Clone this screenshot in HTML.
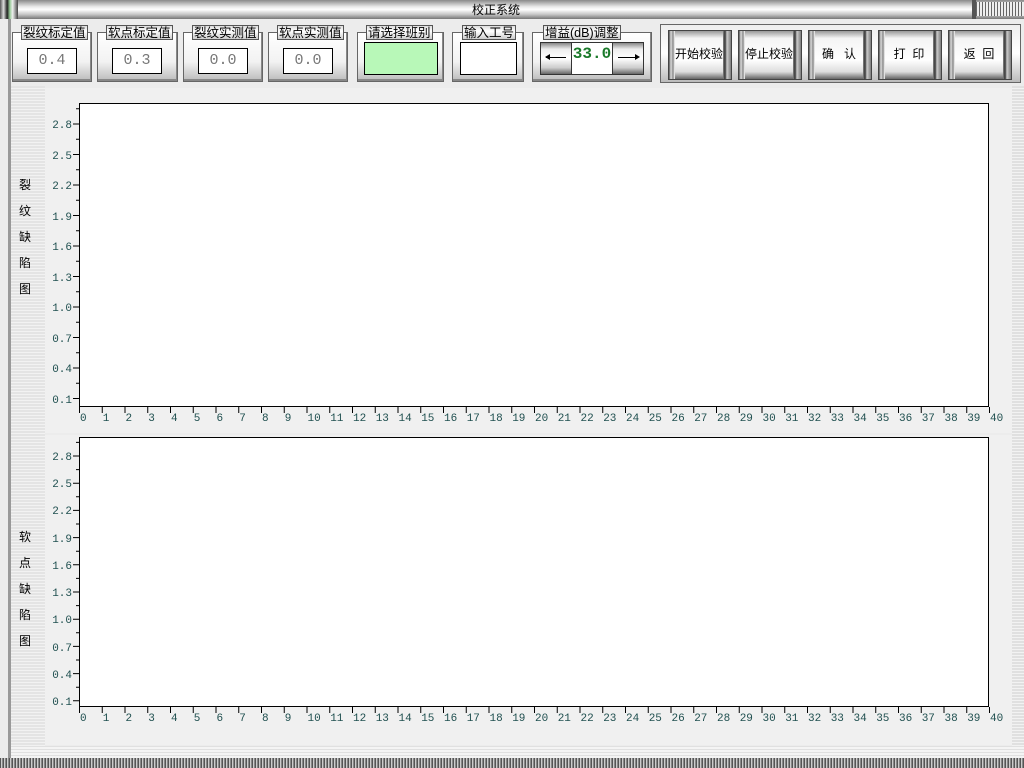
<!DOCTYPE html>
<html><head><meta charset="utf-8"><style>
*{margin:0;padding:0;box-sizing:border-box}
body{width:1024px;height:768px;position:relative;overflow:hidden;background:#ececec;font-family:"Liberation Sans","Noto Sans CJK SC",sans-serif;}
.abs{position:absolute}
.title{left:0;top:0;width:1024px;height:19px;background:linear-gradient(#8a8a8a,#e8e8e8 35%,#fff 50%,#c8c8c8 75%,#777);}
.title span{position:absolute;left:472px;top:1px;font-size:12px;color:#000}
.grp{position:absolute;top:32px;height:50px;border:1px solid #666;background:linear-gradient(#fff,#f2f2f2 60%,#bbb);box-shadow:inset -1px -2px 0 #888}
.lbl{position:absolute;top:25px;height:15px;font-size:12.5px;line-height:14px;padding:0 1px;background:linear-gradient(#ddd,#fff 40%,#ccc);border:1px solid #555;color:#000;white-space:nowrap}
.val{position:absolute;top:48px;height:26px;background:#fff;border:1px solid #000;font-family:"Liberation Mono",monospace;font-size:15px;color:#777;text-align:center;line-height:24px}
.btn{position:absolute;top:30px;width:64px;height:50px;border:1px solid #444;background:linear-gradient(90deg,#555 0,#ddd 2px,#888 4px,#fff 6px,#fff 52px,#888 54px,#333 56px,#ccc 58px,#555 64px);font-size:12px;text-align:center;line-height:47px;white-space:nowrap}
.btn i{position:absolute;left:6px;right:8px;top:0;bottom:0;background:linear-gradient(#999,#f4f4f4 15%,#fff 60%,#ddd 85%,#666);font-style:normal}
</style></head><body>
<div class="abs title"><span>校正系统</span></div>
<div class="abs" style="left:0;top:0;width:18px;height:19px;background:linear-gradient(90deg,#555,#ddd 20%,#222 40%,#9c9 55%,#eee 70%,#444)"></div>
<div class="abs" style="left:972px;top:0;width:4px;height:19px;background:#555"></div>
<div class="abs" style="left:976px;top:2px;width:48px;height:14px;background:repeating-linear-gradient(90deg,#666 0 1px,#eee 1px 3px)"></div>
<div class="abs" style="left:8px;top:19px;width:3px;height:740px;background:#999"></div>
<div class="abs" style="left:11px;top:86px;width:34px;height:660px;background:repeating-linear-gradient(#e4e4e4 0 2px,#f2f2f2 2px 3px)"></div>
<div class="abs" style="left:1012px;top:86px;width:12px;height:660px;background:repeating-linear-gradient(#e0e0e0 0 2px,#f2f2f2 2px 3px)"></div>
<div class="abs" style="left:45px;top:88px;width:967px;height:345px;background:#f0f0f0"></div>
<div class="abs" style="left:45px;top:435px;width:967px;height:310px;background:#f0f0f0"></div>
<div class="abs" style="left:11px;top:746px;width:1013px;height:12px;background:repeating-linear-gradient(#e0e0e0 0 1px,#f4f4f4 1px 3px)"></div>
<div class="abs" style="left:0;top:758px;width:1024px;height:10px;background:repeating-linear-gradient(90deg,#555 0 1px,#ccc 1px 2px,#888 2px 3px)"></div>

<div class="grp" style="left:12px;width:80px"></div><div class="lbl" style="left:21px">裂纹标定值</div><div class="val" style="left:27px;width:50px">0.4</div>
<div class="grp" style="left:97px;width:81px"></div><div class="lbl" style="left:106px">软点标定值</div><div class="val" style="left:112px;width:50px">0.3</div>
<div class="grp" style="left:183px;width:80px"></div><div class="lbl" style="left:192px">裂纹实测值</div><div class="val" style="left:198px;width:50px">0.0</div>
<div class="grp" style="left:268px;width:80px"></div><div class="lbl" style="left:277px">软点实测值</div><div class="val" style="left:283px;width:50px">0.0</div>
<div class="grp" style="left:357px;width:87px"></div><div class="lbl" style="left:366px">请选择班别</div><div class="val" style="left:364px;width:74px;top:42px;height:33px;background:#b8f8b8"></div>
<div class="grp" style="left:452px;width:72px"></div><div class="lbl" style="left:462px">输入工号</div><div class="val" style="left:460px;width:57px;top:42px;height:33px"></div>
<div class="grp" style="left:532px;width:120px"></div><div class="lbl" style="left:543px">增益(dB)调整</div>
<div class="abs" style="left:540px;top:42px;width:104px;height:33px;border:1px solid #333;background:linear-gradient(#888,#eee 20%,#fff 50%,#ccc 80%,#666)"></div>
<div class="abs" style="left:571px;top:42px;width:42px;height:33px;background:#fff;border:1px solid #333;color:#1a7a2a;font-family:'Liberation Mono',monospace;font-size:16px;font-weight:bold;text-align:center;line-height:22px">33.0</div>
<div class="abs" style="left:546px;top:57px;width:20px;height:1px;background:#000"></div><div class="abs" style="left:545px;top:54px;width:0;height:0;border:3px solid transparent;border-right:5px solid #000;border-left:0"></div>
<div class="abs" style="left:618px;top:57px;width:20px;height:1px;background:#000"></div><div class="abs" style="left:635px;top:54px;width:0;height:0;border:3px solid transparent;border-left:5px solid #000;border-right:0"></div>

<div class="abs" style="left:660px;top:24px;width:361px;height:59px;border:1px solid #666;background:linear-gradient(#eee,#fff 50%,#bbb);"></div>
<div class="btn" style="left:668px"><i>开始校验</i></div>
<div class="btn" style="left:738px"><i>停止校验</i></div>
<div class="btn" style="left:808px"><i>确&nbsp;&nbsp;&nbsp;认</i></div>
<div class="btn" style="left:878px"><i>打&nbsp;&nbsp;印</i></div>
<div class="btn" style="left:948px"><i>返&nbsp;&nbsp;回</i></div>

<div class="abs" style="left:19px;top:172px;font-size:12px;line-height:26px;width:14px">裂<br>纹<br>缺<br>陷<br>图</div>
<div class="abs" style="left:19px;top:524px;font-size:12px;line-height:26px;width:14px">软<br>点<br>缺<br>陷<br>图</div>

<svg class="abs" style="left:0;top:0" width="1024" height="768" font-family="Liberation Mono, monospace" font-size="11" fill="#1f4f4f">
<rect x="79.5" y="103.5" width="909" height="303" fill="#fff" stroke="#000"/>
<rect x="79.5" y="437.5" width="909" height="269" fill="#fff" stroke="#000"/>
<path fill="none" stroke="#000" d="M79.5 407v6m22.75-6v6m22.75-6v6m22.75-6v6m22.75-6v6m22.75-6v6m22.75-6v6m22.75-6v6m22.75-6v6m22.75-6v6m22.75-6v6m22.75-6v6m22.75-6v6m22.75-6v6m22.75-6v6m22.75-6v6m22.75-6v6m22.75-6v6m22.75-6v6m22.75-6v6m22.75-6v6m22.75-6v6m22.75-6v6m22.75-6v6m22.75-6v6m22.75-6v6m22.75-6v6m22.75-6v6m22.75-6v6m22.75-6v6m22.75-6v6m22.75-6v6m22.75-6v6m22.75-6v6m22.75-6v6m22.75-6v6m22.75-6v6m22.75-6v6m22.75-6v6m22.75-6v6m22.75-6v6"/>
<path fill="none" stroke="#000" d="M79.5 707v6m22.75-6v6m22.75-6v6m22.75-6v6m22.75-6v6m22.75-6v6m22.75-6v6m22.75-6v6m22.75-6v6m22.75-6v6m22.75-6v6m22.75-6v6m22.75-6v6m22.75-6v6m22.75-6v6m22.75-6v6m22.75-6v6m22.75-6v6m22.75-6v6m22.75-6v6m22.75-6v6m22.75-6v6m22.75-6v6m22.75-6v6m22.75-6v6m22.75-6v6m22.75-6v6m22.75-6v6m22.75-6v6m22.75-6v6m22.75-6v6m22.75-6v6m22.75-6v6m22.75-6v6m22.75-6v6m22.75-6v6m22.75-6v6m22.75-6v6m22.75-6v6m22.75-6v6m22.75-6v6"/>
<path fill="none" stroke="#000" d="M76 108.75h3m-6 15.25h6m-3 15.25h3m-6 15.25h6m-3 15.25h3m-6 15.25h6m-3 15.25h3m-6 15.25h6m-3 15.25h3m-6 15.25h6m-3 15.25h3m-6 15.25h6m-3 15.25h3m-6 15.25h6m-3 15.25h3m-6 15.25h6m-3 15.25h3m-6 15.25h6m-3 15.25h3m-6 15.25h6"/>
<path fill="none" stroke="#000" d="M76 442.4h3m-6 13.6h6m-3 13.6h3m-6 13.6h6m-3 13.6h3m-6 13.6h6m-3 13.6h3m-6 13.6h6m-3 13.6h3m-6 13.6h6m-3 13.6h3m-6 13.6h6m-3 13.6h3m-6 13.6h6m-3 13.6h3m-6 13.6h6m-3 13.6h3m-6 13.6h6m-3 13.6h3m-6 13.6h6"/>
<g text-anchor="end">
<text x="72" y="128">2.8</text><text x="72" y="159">2.5</text><text x="72" y="189">2.2</text><text x="72" y="220">1.9</text><text x="72" y="250">1.6</text><text x="72" y="281">1.3</text><text x="72" y="311">1.0</text><text x="72" y="342">0.7</text><text x="72" y="372">0.4</text><text x="72" y="403">0.1</text>
<text x="72" y="460">2.8</text><text x="72" y="487">2.5</text><text x="72" y="514">2.2</text><text x="72" y="542">1.9</text><text x="72" y="569">1.6</text><text x="72" y="596">1.3</text><text x="72" y="623">1.0</text><text x="72" y="651">0.7</text><text x="72" y="678">0.4</text><text x="72" y="705">0.1</text>
</g>
<g>
<text y="421" x="80">0</text><text y="421" x="102.7">1</text><text y="421" x="125.5">2</text><text y="421" x="148.2">3</text><text y="421" x="171">4</text><text y="421" x="193.7">5</text><text y="421" x="216.5">6</text><text y="421" x="239.2">7</text><text y="421" x="262">8</text><text y="421" x="284.7">9</text><text y="421" x="307.5">10</text><text y="421" x="330.2">11</text><text y="421" x="353">12</text><text y="421" x="375.7">13</text><text y="421" x="398.5">14</text><text y="421" x="421.2">15</text><text y="421" x="444">16</text><text y="421" x="466.7">17</text><text y="421" x="489.5">18</text><text y="421" x="512.2">19</text><text y="421" x="535">20</text><text y="421" x="557.7">21</text><text y="421" x="580.5">22</text><text y="421" x="603.2">23</text><text y="421" x="626">24</text><text y="421" x="648.7">25</text><text y="421" x="671.5">26</text><text y="421" x="694.2">27</text><text y="421" x="717">28</text><text y="421" x="739.7">29</text><text y="421" x="762.5">30</text><text y="421" x="785.2">31</text><text y="421" x="808">32</text><text y="421" x="830.7">33</text><text y="421" x="853.5">34</text><text y="421" x="876.2">35</text><text y="421" x="899">36</text><text y="421" x="921.7">37</text><text y="421" x="944.5">38</text><text y="421" x="967.2">39</text><text y="421" x="990">40</text>
</g>
<g>
<text y="721" x="80">0</text><text y="721" x="102.7">1</text><text y="721" x="125.5">2</text><text y="721" x="148.2">3</text><text y="721" x="171">4</text><text y="721" x="193.7">5</text><text y="721" x="216.5">6</text><text y="721" x="239.2">7</text><text y="721" x="262">8</text><text y="721" x="284.7">9</text><text y="721" x="307.5">10</text><text y="721" x="330.2">11</text><text y="721" x="353">12</text><text y="721" x="375.7">13</text><text y="721" x="398.5">14</text><text y="721" x="421.2">15</text><text y="721" x="444">16</text><text y="721" x="466.7">17</text><text y="721" x="489.5">18</text><text y="721" x="512.2">19</text><text y="721" x="535">20</text><text y="721" x="557.7">21</text><text y="721" x="580.5">22</text><text y="721" x="603.2">23</text><text y="721" x="626">24</text><text y="721" x="648.7">25</text><text y="721" x="671.5">26</text><text y="721" x="694.2">27</text><text y="721" x="717">28</text><text y="721" x="739.7">29</text><text y="721" x="762.5">30</text><text y="721" x="785.2">31</text><text y="721" x="808">32</text><text y="721" x="830.7">33</text><text y="721" x="853.5">34</text><text y="721" x="876.2">35</text><text y="721" x="899">36</text><text y="721" x="921.7">37</text><text y="721" x="944.5">38</text><text y="721" x="967.2">39</text><text y="721" x="990">40</text>
</g>
</svg>
</body></html>
